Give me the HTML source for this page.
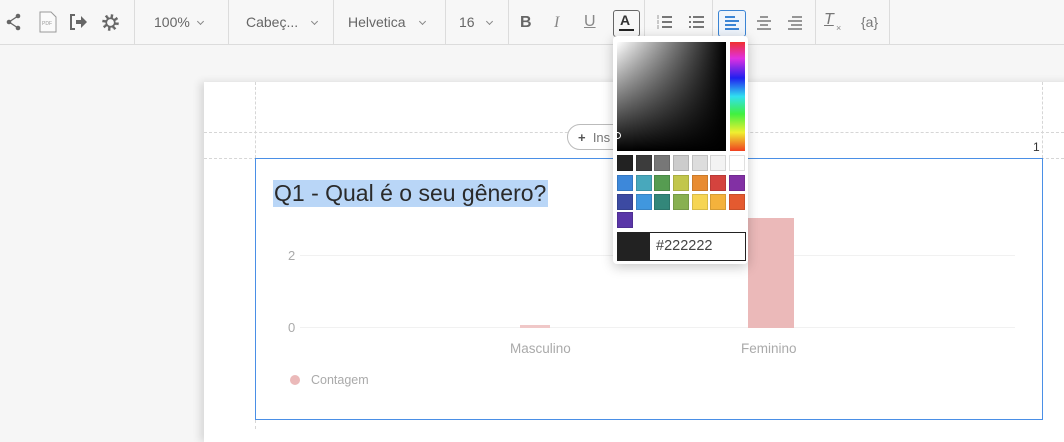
<!DOCTYPE html>
<html><head><meta charset="utf-8"><style>
*{box-sizing:border-box;margin:0;padding:0}
body{width:1064px;height:429px;overflow:hidden;background:#f6f6f6;font-family:"Liberation Sans",sans-serif;position:relative}
.a{position:absolute}
.tb{left:0;top:0;width:1064px;height:45px;background:#f7f7f7;border-bottom:1px solid #dcdcdc}
.sep{top:0;width:1px;height:45px;background:#dcdcdc}
.t{color:#666;font-size:14px;top:14px}
.chev{display:inline-block;width:5px;height:5px;border-right:1px solid #888;border-bottom:1px solid #888;transform:rotate(45deg);margin-left:8px;position:relative;top:-3px}
.page{left:204px;top:82px;width:870px;height:360px;background:#fff;box-shadow:-4px 0 8px rgba(0,0,0,.12)}
.dh{height:0;border-top:1px dashed #d6d6d6}
.dv{width:0;border-left:1px dashed #d6d6d6}
.sw{width:16px;height:16px;border:1px solid rgba(0,0,0,.12)}
.lbl{color:#aaa;font-size:13px}
</style></head><body>
<div class="a tb"></div>
<svg class="a" style="left:5px;top:13px" width="18" height="18" viewBox="0 0 18 18"><circle cx="13" cy="3" r="2.3" fill="#666"/><circle cx="4" cy="9" r="2.3" fill="#666"/><circle cx="13" cy="15" r="2.3" fill="#666"/><path d="M13 3L4 9L13 15" stroke="#666" stroke-width="1.3" fill="none"/></svg>
<svg class="a" style="left:39px;top:11px" width="18" height="22" viewBox="0 0 18 22"><path d="M1 1H12L17 6V21H1Z" fill="#fafafa" stroke="#999"/><text x="3" y="14" font-size="5" fill="#999" font-family="Liberation Sans">PDF</text></svg>
<svg class="a" style="left:69px;top:13px" width="20" height="18" viewBox="0 0 20 18"><path d="M6 2H2V16H6" stroke="#666" stroke-width="2" fill="none"/><path d="M7 7H12V3L18 9L12 15V11H7Z" fill="#666"/></svg>
<svg class="a" style="left:101px;top:13px" width="19" height="19" viewBox="0 0 20 20"><circle cx="10" cy="10" r="5.5" stroke="#666" stroke-width="2.5" fill="none" stroke-dasharray="2.4 1.9"/><circle cx="10" cy="10" r="4.5" stroke="#666" stroke-width="1.8" fill="none"/><circle cx="10" cy="10" r="7.5" stroke="#666" stroke-width="2.5" fill="none" stroke-dasharray="2.5 3.4"/></svg>
<div class="a sep" style="left:134px"></div>
<div class="a t" style="left:154px">100%<span class="chev"></span></div>
<div class="a sep" style="left:228px"></div>
<div class="a t" style="left:246px">Cabeç...<span class="chev" style="margin-left:14px"></span></div>
<div class="a sep" style="left:333px"></div>
<div class="a t" style="left:348px">Helvetica<span class="chev" style="margin-left:14px"></span></div>
<div class="a sep" style="left:445px"></div>
<div class="a t" style="left:459px">16<span class="chev" style="margin-left:12px"></span></div>
<div class="a sep" style="left:508px"></div>
<div class="a" style="left:520px;top:14px;font-weight:bold;font-size:16px;color:#666">B</div>
<div class="a" style="left:554px;top:14px;font-style:italic;font-size:16px;color:#888;font-family:'Liberation Serif',serif">I</div>
<div class="a" style="left:584px;top:13px;font-size:16px;color:#888;text-decoration:underline">U</div>
<div class="a" style="left:613px;top:10px;width:27px;height:27px;border:1px solid #666;border-radius:3px"></div>
<div class="a" style="left:620px;top:12px;font-weight:bold;font-size:14px;color:#333">A</div>
<div class="a" style="left:619px;top:29px;width:15px;height:2px;background:#222"></div>
<div class="a sep" style="left:644px"></div>
<svg class="a" style="left:656px;top:14px" width="16" height="16"><g stroke="#777" stroke-width="2"><path d="M6 3H16M6 8H16M6 13H16"/></g><g stroke="#999" stroke-width="1"><path d="M2 1V5M2 6V10M2 11V15"/></g></svg>
<svg class="a" style="left:688px;top:14px" width="16" height="16"><g stroke="#777" stroke-width="2"><path d="M5 3H16M5 8H16M5 13H16M1 3H3M1 8H3M1 13H3"/></g></svg>
<div class="a sep" style="left:712px"></div>
<div class="a" style="left:718px;top:10px;width:28px;height:27px;border:1px solid #3a84d4;border-radius:3px;background:#eef4fb"></div>
<svg class="a" style="left:724px;top:15px" width="16" height="16"><g stroke="#3a84d4" stroke-width="2"><path d="M1 2H11M1 6H15M1 10H12M1 14H15"/></g></svg>
<svg class="a" style="left:756px;top:15px" width="16" height="16"><g stroke="#777" stroke-width="1.6"><path d="M4 2H12M1 6H15M4 10H12M1 14H15"/></g></svg>
<svg class="a" style="left:787px;top:15px" width="16" height="16"><g stroke="#777" stroke-width="1.6"><path d="M5 2H15M1 6H15M4 10H15M1 14H15"/></g></svg>
<div class="a sep" style="left:815px"></div>
<div class="a" style="left:824px;top:11px;font-style:italic;font-size:16px;color:#777;text-decoration:underline">T</div>
<div class="a" style="left:836px;top:23px;font-size:9px;color:#888">×</div>
<div class="a" style="left:861px;top:14px;font-size:14px;color:#777">{a}</div>
<div class="a sep" style="left:889px"></div>

<div class="a page"></div>
<div class="a dv" style="left:255px;top:82px;height:76px"></div>
<div class="a dv" style="left:1042px;top:82px;height:76px"></div>
<div class="a dh" style="left:204px;top:132px;width:860px"></div>
<div class="a dh" style="left:204px;top:158px;width:860px"></div>
<div class="a dv" style="left:255px;top:420px;height:9px"></div>
<div class="a" style="left:1033px;top:140px;font-size:12px;color:#333">1</div>
<div class="a" style="left:567px;top:124px;width:60px;height:26px;border:1px solid #bbb;border-radius:13px;background:#fff;font-size:13px;color:#777;padding:5px 0 0 10px"><b style="color:#555">+</b>&nbsp; Ins</div>
<div class="a" style="left:255px;top:158px;width:788px;height:262px;border:1px solid #4a8fe6"></div>
<div class="a" style="left:273px;top:180px;font-size:23px;line-height:27px;color:#2a2a2a;background:#b9d6f7;padding:0 2px 0 1px">Q1 - Qual é o seu gênero?</div>
<div class="a dh" style="left:300px;top:255px;width:715px;border-top:1px solid #f1f1f1"></div>
<div class="a dh" style="left:300px;top:327px;width:715px;border-top:1px solid #f1f1f1"></div>
<div class="a lbl" style="left:288px;top:248px">2</div>
<div class="a lbl" style="left:288px;top:320px">0</div>
<div class="a" style="left:520px;top:325px;width:30px;height:3px;background:#f0c8c8"></div>
<div class="a" style="left:748px;top:218px;width:46px;height:110px;background:#ebb9b9"></div>
<div class="a lbl" style="left:510px;top:341px;font-size:13.5px">Masculino</div>
<div class="a lbl" style="left:741px;top:341px;font-size:13.5px">Feminino</div>
<div class="a" style="left:290px;top:375px;width:10px;height:10px;border-radius:50%;background:#ebb9b9"></div>
<div class="a lbl" style="left:311px;top:373px;font-size:12.5px">Contagem</div>

<div class="a" style="left:613px;top:36px;width:135px;height:228px;background:#fff;border-radius:4px;box-shadow:0 3px 12px rgba(0,0,0,.22)"></div>
<div class="a" style="left:617px;top:42px;width:109px;height:109px;background:linear-gradient(to top,#000,rgba(0,0,0,0)),linear-gradient(to right,#fff,#000)"></div>
<div class="a" style="left:614px;top:132px;width:7px;height:7px;border:1.5px solid #fff;border-radius:50%"></div>
<div class="a" style="left:730px;top:42px;width:15px;height:109px;background:linear-gradient(to bottom,#f03030,#e030e0 15%,#2020f0 33%,#30e0f0 50%,#40f040 66%,#f0f030 83%,#f04020)"></div>
<div class="a sw" style="left:617px;top:155px;background:#222"></div>
<div class="a sw" style="left:636px;top:155px;background:#3c3c3c"></div>
<div class="a sw" style="left:654px;top:155px;background:#777"></div>
<div class="a sw" style="left:673px;top:155px;background:#ccc"></div>
<div class="a sw" style="left:692px;top:155px;background:#ddd"></div>
<div class="a sw" style="left:710px;top:155px;background:#f3f3f3"></div>
<div class="a sw" style="left:729px;top:155px;background:#fff"></div>
<div class="a sw" style="left:617px;top:175px;background:#3d88da"></div>
<div class="a sw" style="left:636px;top:175px;background:#48a8bc"></div>
<div class="a sw" style="left:654px;top:175px;background:#569c51"></div>
<div class="a sw" style="left:673px;top:175px;background:#c2c64c"></div>
<div class="a sw" style="left:692px;top:175px;background:#e88c32"></div>
<div class="a sw" style="left:710px;top:175px;background:#d4433e"></div>
<div class="a sw" style="left:729px;top:175px;background:#8230a4"></div>
<div class="a sw" style="left:617px;top:194px;background:#3c4aa2"></div>
<div class="a sw" style="left:636px;top:194px;background:#4097de"></div>
<div class="a sw" style="left:654px;top:194px;background:#33877a"></div>
<div class="a sw" style="left:673px;top:194px;background:#88b050"></div>
<div class="a sw" style="left:692px;top:194px;background:#f6d554"></div>
<div class="a sw" style="left:710px;top:194px;background:#f4b23c"></div>
<div class="a sw" style="left:729px;top:194px;background:#e45a30"></div>
<div class="a sw" style="left:617px;top:212px;background:#5a36a8"></div>
<div class="a" style="left:617px;top:232px;width:129px;height:29px;border:1px solid #222;background:#222"></div>
<div class="a" style="left:650px;top:233px;width:95px;height:27px;background:#fff;font-size:14.5px;color:#444;padding:5px 0 0 6px">#222222</div>
</body></html>
